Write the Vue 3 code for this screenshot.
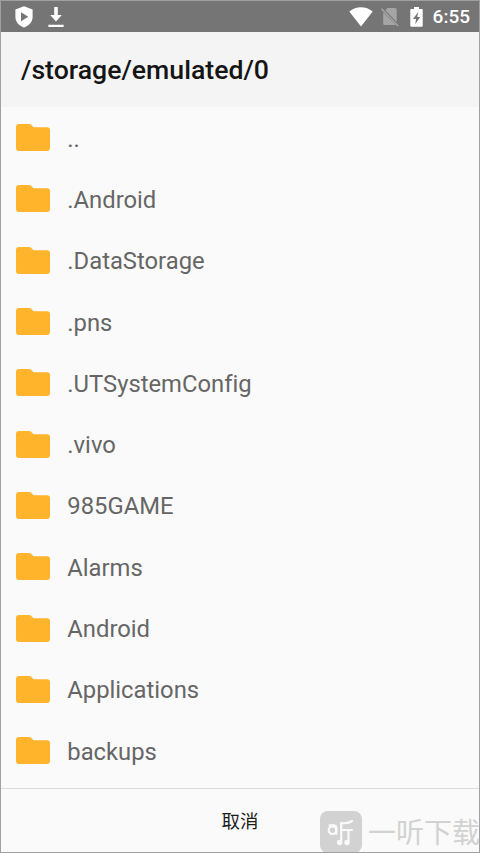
<script setup>
const folders = [
  '..',
  '.Android',
  '.DataStorage',
  '.pns',
  '.UTSystemConfig',
  '.vivo',
  '985GAME',
  'Alarms',
  'Android',
  'Applications',
  'backups',
]
</script>

<template>
  <main class="screen">
    <header class="status">
      <svg class="shield" viewBox="0 0 18 22">
        <path fill="#fff" fill-rule="evenodd" d="M9 0.3 17.6 3.5V11c0 5-3.6 8.7-8.6 10.5C4 19.700.4 16 .4 11V3.500ZM6 6.300V15.300L13.300 10.800Z" />
      </svg>
      <svg class="download" viewBox="0 0 16 20">
        <path fill="#fff" d="M6.200 0h3.600v8h4L8 14.600 2.200 8h4ZM.4 17.800h15.200V20H.4Z" />
      </svg>
      <span class="spacer"></span>
      <svg class="wifi" viewBox="0 0 24 20">
        <path fill="#fff" d="M0.300 4.600C7-1.100 17-1.100 23.700 4.600L12 19.400Z" />
      </svg>
      <svg class="sim" viewBox="0 0 18 20">
        <path fill="#a5a5a5" d="M6.500 1H14q1.700 0 1.700 1.700V15L4.300 3.200ZM2.200 5.200 14.800 18H3.500q-1.300 0-1.300-1.300Z" />
        <path stroke="#a5a5a5" stroke-width="1.500" d="M.5 1.800 17 19" />
      </svg>
      <svg class="battery" viewBox="0 0 13 20">
        <path fill="#fff" fill-rule="evenodd" d="M4 0h5v2h2.700q1 0 1 1V18.800q0 1-1 1H1.300q-1 0-1-1V3q0-1 1-1H4ZM8.200 5 3 12h3.100L5.200 17.200 10.200 10H7.300Z" />
      </svg>
      <span class="clock">6:55</span>
    </header>
    <h1 class="path">/storage/emulated/0</h1>
    <ul class="list">
      <li v-for="name in folders" :key="name" class="row">
        <svg class="folder" viewBox="0 0 34 27">
          <path fill="#ffb42c" d="M3.200 0H13q1.200 0 2 .8l2.600 2.500H31q3 0 3 3V24q0 3-3 3H3q-3 0-3-3V3.200Q0 0 3.200 0Z" />
        </svg>
        <span>{{ name }}</span>
      </li>
    </ul>
    <footer class="footer">
      <button class="cancel">取消</button>
    </footer>
    <div class="watermark">
      <svg class="brand" viewBox="0 0 42 42">
        <rect width="42" height="42" rx="8" fill="#d2d2d2" />
        <g fill="none" stroke="#fafafa" stroke-width="2.200" stroke-linecap="round" stroke-linejoin="round">
          <circle cx="12.500" cy="19.200" r="3.800" />
          <path d="M9.500 14.500Q14 13.500 16.300 15.500V23M32 10Q28 13 21.200 12V30M21.200 19H32M28.500 19V31" />
        </g>
        <circle cx="19.600" cy="31.500" r="2.700" fill="#fafafa" />
        <circle cx="27" cy="31.500" r="2.700" fill="#fafafa" />
      </svg>
      <span class="brand-name">一听下载</span>
    </div>
  </main>
</template>

<style>
body {
  margin: 0;
}
</style>

<style scoped>
.screen {
  position: relative;
  display: flex;
  flex-direction: column;
  box-sizing: border-box;
  width: 480px;
  height: 853px;
  overflow: hidden;
  border: 1px solid #a0a0a0;
  background: #fafafa;
  font-family: Roboto, "Noto Sans CJK SC", sans-serif;
}
.status {
  display: flex;
  flex: none;
  align-items: center;
  box-sizing: border-box;
  height: 31px;
  padding: 0 9px 0 14px;
  background: #757575;
}
.shield {
  width: 18px;
  height: 22px;
}
.download {
  width: 16px;
  height: 20px;
  margin-left: 15px;
}
.spacer {
  flex: 1;
}
.wifi {
  width: 24px;
  height: 20px;
}
.sim {
  width: 18px;
  height: 20px;
  margin-left: 8px;
}
.battery {
  width: 13px;
  height: 20px;
  margin-left: 11px;
}
.clock {
  margin-left: 10px;
  color: #fff;
  font-size: 19px;
  font-weight: 500;
  line-height: 31px;
}
.path {
  flex: none;
  box-sizing: border-box;
  height: 75px;
  margin: 0;
  padding: 1px 20px 0;
  background: #f4f4f4;
  color: #151515;
  font-size: 26.650px;
  font-weight: 500;
  line-height: 75px;
}
.list {
  flex: 1;
  min-height: 0;
  margin: 0;
  padding: 0;
  list-style: none;
}
.row {
  display: flex;
  align-items: center;
  gap: 17px;
  height: 61.300px;
  padding-left: 15.300px;
  color: #666;
  font-size: 23.800px;
  font-variant-ligatures: none;
}
.row span {
  padding-top: 2px;
}
.folder {
  width: 34px;
  height: 27px;
}
.footer {
  display: flex;
  flex: none;
  justify-content: center;
  height: 63px;
  border-top: 1px solid #dcdcdc;
}
.cancel {
  padding: 0 0 1px;
  border: 0;
  background: none;
  color: #1c1c1c;
  font: 18.500px "Noto Sans CJK SC", sans-serif;
}
.watermark {
  position: absolute;
  top: 810px;
  left: 319px;
  display: flex;
  align-items: center;
  gap: 6px;
  color: #d2d2d2;
}
.brand {
  flex: none;
  width: 42px;
  height: 42px;
}
.brand-name {
  padding-bottom: 2px;
  font: 28px/40px "Noto Sans CJK SC", sans-serif;
  white-space: nowrap;
}
</style>
